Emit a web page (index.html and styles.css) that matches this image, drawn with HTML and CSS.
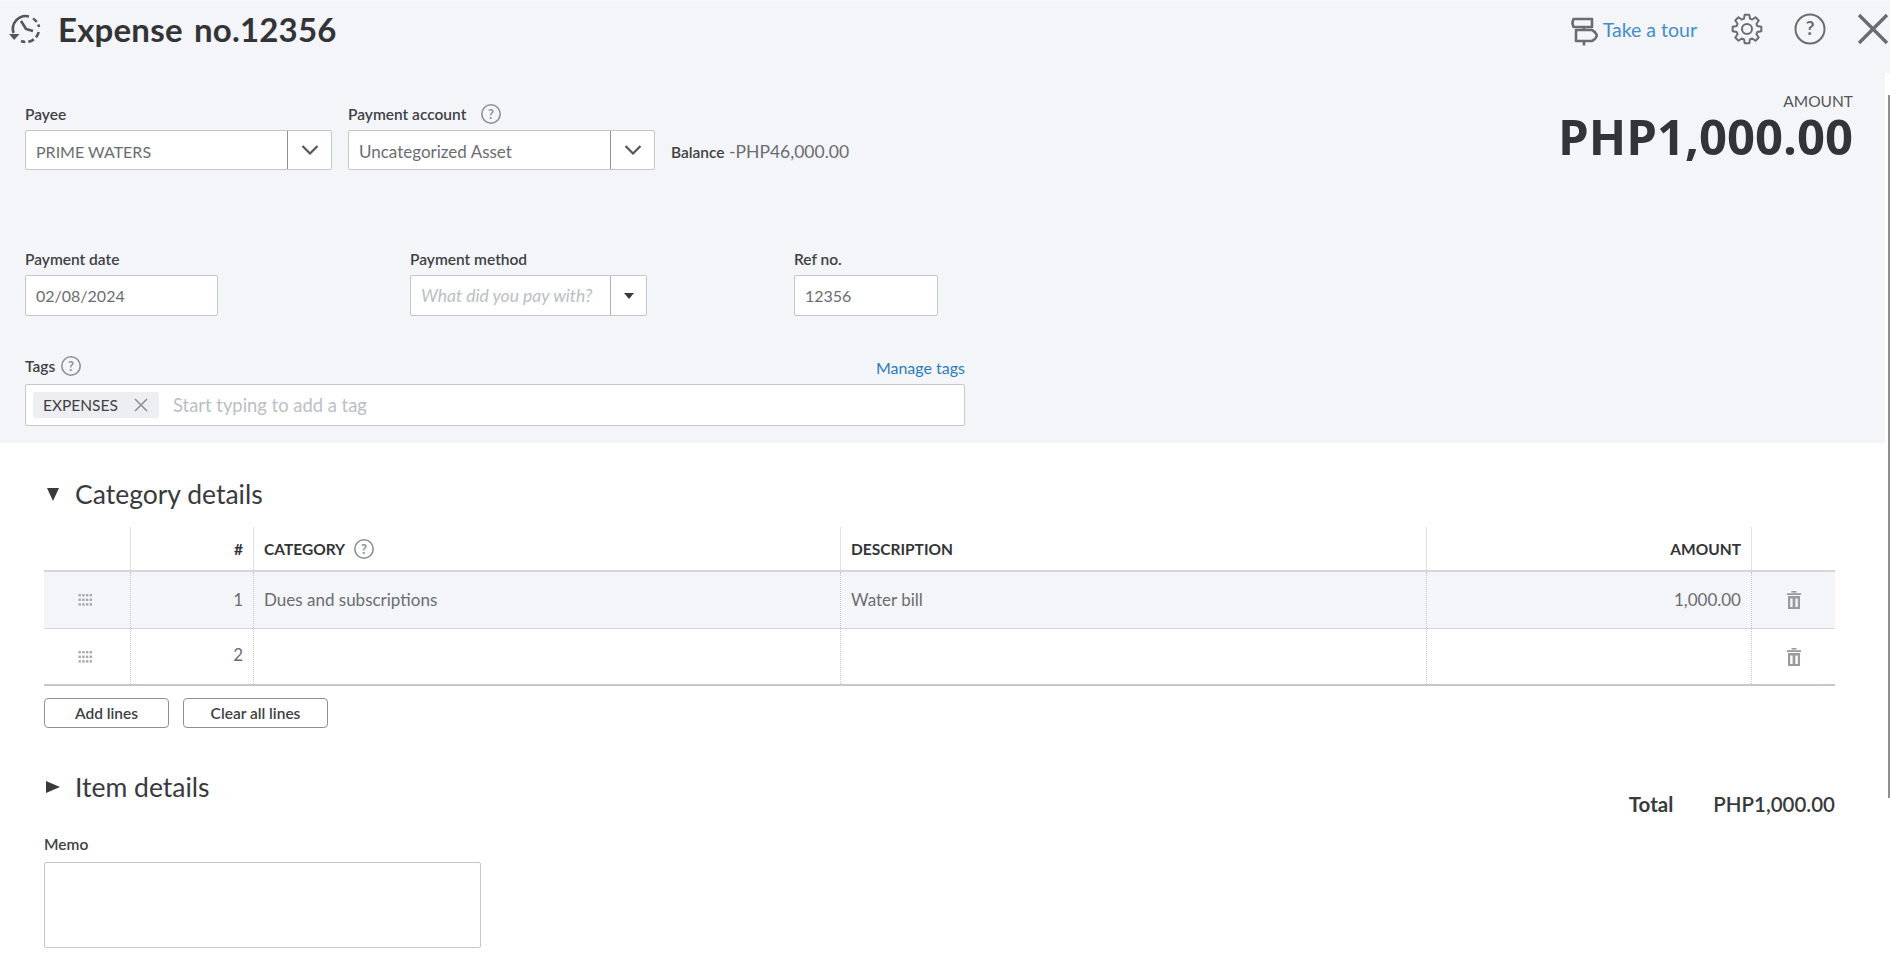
FILE: index.html
```html
<!DOCTYPE html>
<html lang="en">

<head>
    <meta charset="UTF-8">
    <title>Expense no.12356</title>
    <link rel="stylesheet" href="styles.css">
</head>

<body>
    <section class="hoved">
        <div class="titel-bar">
            <div class="titel">
                <svg class="historik" viewBox="0 0 34 32" fill="none" stroke="#54565a" stroke-width="2.6">
                    <path d="M4.5 20 A13 13 0 0 1 20 3.4" />
                    <path d="M24 5.5 A13 13 0 0 1 30 14" stroke-dasharray="5 3" />
                    <path d="M29.7 19 A13 13 0 0 1 12 28" stroke-dasharray="6 3" />
                    <path d="M12 8 L17 16 L24 18" />
                    <path d="M0 21 H10.5 L5.2 27 Z" fill="#54565a" stroke="none" />
                </svg>
                <h1>Expense no.12356</h1>
            </div>
            <div class="vaerktoj">
                <a class="tour" href="#">
                    <svg class="skilt" viewBox="0 0 28 30" fill="none" stroke="#6b6c72" stroke-width="2.6" stroke-linejoin="round">
                        <path d="M3.5 3 H22 V11 H3.5 Q1.5 7 3.5 3 Z" />
                        <path d="M6 14 H22 Q26 16 27 19.5 Q26 23 22 25 H6 Z" />
                        <path d="M14 11 V14 M14 25 V29.5" />
                    </svg>
                    Take a tour
                </a>
                <svg class="ikon" viewBox="0 0 32 32" fill="none" stroke="#6b6c72" stroke-width="2" stroke-linejoin="round">
                    <g transform="translate(16 16)">
                        <circle r="5" />
                        <polygon points="-2.98,-10.38 -2.27,-14.32 2.27,-14.32 2.98,-10.38 5.23,-9.45 8.52,-11.73 11.73,-8.52 9.45,-5.23 10.38,-2.98 14.32,-2.27 14.32,2.27 10.38,2.98 9.45,5.23 11.73,8.52 8.52,11.73 5.23,9.45 2.98,10.38 2.27,14.32 -2.27,14.32 -2.98,10.38 -5.23,9.45 -8.52,11.73 -11.73,8.52 -9.45,5.23 -10.38,2.98 -14.32,2.27 -14.32,-2.27 -10.38,-2.98 -9.45,-5.23 -11.73,-8.52 -8.52,-11.73 -5.23,-9.45" />
                    </g>
                </svg>
                <svg class="ikon" viewBox="0 0 32 32">
                    <circle cx="16" cy="16" r="14.5" fill="none" stroke="#6b6c72" stroke-width="2" />
                    <text x="16" y="22" text-anchor="middle" class="hjaelp-tegn">?</text>
                </svg>
                <svg class="luk" viewBox="0 0 32 32" stroke="#6b6c72" stroke-width="3.4">
                    <path d="M2 2 L30 30 M30 2 L2 30" />
                </svg>
            </div>
        </div>

        <div class="raekke-et">
            <div class="felter">
                <div class="felt">
                    <label>Payee</label>
                    <div class="boks vaelg bred">
                        <span class="vaerdi caps">PRIME WATERS</span>
                        <span class="pil"><svg viewBox="0 0 18 10" fill="none" stroke="#54565a" stroke-width="2.2"><path d="M1.5 1 L9 8.5 L16.5 1" /></svg></span>
                    </div>
                </div>
                <div class="felt">
                    <label>Payment account <svg class="spm spm-luft" viewBox="0 0 20 20"><circle cx="10" cy="10" r="9.2" fill="none" stroke="#8d9096" stroke-width="1.6" /><text x="10" y="14.6" text-anchor="middle">?</text></svg></label>
                    <div class="boks vaelg bred">
                        <span class="vaerdi">Uncategorized Asset</span>
                        <span class="pil"><svg viewBox="0 0 18 10" fill="none" stroke="#54565a" stroke-width="2.2"><path d="M1.5 1 L9 8.5 L16.5 1" /></svg></span>
                    </div>
                </div>
                <p class="saldo"><b>Balance</b> -PHP46,000.00</p>
            </div>
            <div class="beloeb">
                <span>AMOUNT</span>
                <strong>PHP1,000.00</strong>
            </div>
        </div>

        <div class="raekke-to">
            <div class="felt dato">
                <label>Payment date</label>
                <div class="boks hoej"><span class="vaerdi">02/08/2024</span></div>
            </div>
            <div class="felt metode">
                <label>Payment method</label>
                <div class="boks vaelg hoej">
                    <span class="vaerdi tom">What did you pay with?</span>
                    <span class="pil lille"><i class="trekant"></i></span>
                </div>
            </div>
            <div class="felt ref">
                <label>Ref no.</label>
                <div class="boks hoej"><span class="vaerdi">12356</span></div>
            </div>
        </div>

        <div class="tags">
            <div class="tags-top">
                <label>Tags <svg class="spm" viewBox="0 0 20 20"><circle cx="10" cy="10" r="9.2" fill="none" stroke="#8d9096" stroke-width="1.6" /><text x="10" y="14.6" text-anchor="middle">?</text></svg></label>
                <a href="#">Manage tags</a>
            </div>
            <div class="boks tag-boks">
                <span class="tag">EXPENSES
                    <svg viewBox="0 0 14 14" stroke="#8d9096" stroke-width="1.6"><path d="M1 1 L13 13 M13 1 L1 13" /></svg>
                </span>
                <span class="tag-tekst">Start typing to add a tag</span>
            </div>
        </div>
    </section>

    <section class="detaljer">
        <h2 class="sektion kategori"><i class="ned"></i>Category details</h2>

        <div class="tabel">
            <div class="linje top">
                <div></div>
                <div class="hoejre">#</div>
                <div>CATEGORY <svg class="spm" viewBox="0 0 20 20"><circle cx="10" cy="10" r="9.2" fill="none" stroke="#8d9096" stroke-width="1.6" /><text x="10" y="14.6" text-anchor="middle">?</text></svg></div>
                <div>DESCRIPTION</div>
                <div class="hoejre">AMOUNT</div>
                <div></div>
            </div>
            <div class="linje valgt">
                <div class="midt"><svg class="greb" viewBox="0 0 14 12" fill="#a5a8ad"><use href="#prikker" /></svg></div>
                <div class="hoejre">1</div>
                <div>Dues and subscriptions</div>
                <div>Water bill</div>
                <div class="hoejre">1,000.00</div>
                <div class="midt"><svg class="spand" viewBox="0 0 14 18" fill="#999b9f"><use href="#spand" /></svg></div>
            </div>
            <div class="linje sidst">
                <div class="midt"><svg class="greb" viewBox="0 0 14 12" fill="#a5a8ad"><use href="#prikker" /></svg></div>
                <div class="hoejre">2</div>
                <div></div>
                <div></div>
                <div></div>
                <div class="midt"><svg class="spand" viewBox="0 0 14 18" fill="#999b9f"><use href="#spand" /></svg></div>
            </div>
        </div>

        <div class="knapper">
            <button class="knap add">Add lines</button>
            <button class="knap clear">Clear all lines</button>
        </div>

        <div class="bund">
            <div>
                <h2 class="sektion item"><i class="hen"></i>Item details</h2>
                <label class="memo-label">Memo</label>
                <div class="memo"></div>
            </div>
            <div class="total">
                <span>Total</span>
                <span class="total-tal">PHP1,000.00</span>
            </div>
        </div>
    </section>

    <div class="kant"></div>
    <div class="rullebar"></div>

    <svg class="defs" width="0" height="0">
        <defs>
            <g id="prikker">
                <rect x="0.5" y="0" width="2.4" height="2.4" /><rect x="4.2" y="0" width="2.4" height="2.4" /><rect x="7.9" y="0" width="2.4" height="2.4" /><rect x="11.6" y="0" width="2.4" height="2.4" />
                <rect x="0.5" y="4.6" width="2.4" height="2.4" /><rect x="4.2" y="4.6" width="2.4" height="2.4" /><rect x="7.9" y="4.6" width="2.4" height="2.4" /><rect x="11.6" y="4.6" width="2.4" height="2.4" />
                <rect x="0.5" y="9.2" width="2.4" height="2.4" /><rect x="4.2" y="9.2" width="2.4" height="2.4" /><rect x="7.9" y="9.2" width="2.4" height="2.4" /><rect x="11.6" y="9.2" width="2.4" height="2.4" />
            </g>
            <g id="spand">
                <rect x="4.5" y="0" width="5" height="1.6" />
                <rect x="0" y="2.2" width="14" height="1.8" />
                <path d="M1 5 H13 V18 H1 Z M3.2 7.5 V16 H5.6 V7.5 Z M8.4 7.5 V16 H10.8 V7.5 Z" fill-rule="evenodd" />
            </g>
        </defs>
    </svg>
</body>

</html>
```

FILE: styles.css
```css
* {
    box-sizing: border-box;
}

html,
body {
    margin: 0;
    height: 100%;
    overflow: hidden;
}

body {
    position: relative;
    background-color: #fff;
    color: #393a3d;
    font-family: Lato, "Open Sans", sans-serif;
    font-size: 15px;
}

label {
    display: flex;
    align-items: flex-start;
    gap: 6px;
    font-size: 15.5px;
    font-weight: 600;
    color: #404145;
}

a {
    color: #2b7cbf;
    text-decoration: none;
}

.hoved {
    height: 443px;
    background-color: #f4f5f8;
    border-top: 1px solid #fafafb;
}

.titel-bar {
    display: flex;
    justify-content: space-between;
    align-items: center;
    height: 56px;
}

.titel {
    display: flex;
    align-items: center;
    padding-left: 9px;
}

.historik {
    width: 34px;
    height: 32px;
    margin-right: 15px;
}

h1 {
    margin: 0;
    font-size: 33px;
    font-weight: 700;
    letter-spacing: 0.2px;
    word-spacing: 3px;
    color: #333437;
}

.vaerktoj {
    display: flex;
    align-items: center;
}

.tour {
    display: flex;
    align-items: center;
    gap: 5px;
    font-size: 19.5px;
    margin-right: 34px;
    color: #3f8fcb;
}

.skilt {
    width: 28px;
    height: 30px;
    margin-top: 4px;
}

.ikon {
    width: 32px;
    height: 32px;
    margin-right: 31px;
}

.hjaelp-tegn {
    font-family: Lato, sans-serif;
    font-size: 19px;
    font-weight: 700;
    fill: #6b6c72;
}

.luk {
    width: 32px;
    height: 32px;
    margin-right: 1px;
}

.raekke-et {
    display: flex;
    justify-content: space-between;
    padding: 0 37px 0 25px;
    height: 113px;
}

.felter {
    display: flex;
    align-items: flex-end;
    gap: 16px;
    height: 113px;
}

.felt label {
    height: 24px;
    line-height: 16px;
}

.boks {
    display: flex;
    align-items: center;
    background-color: #fff;
    border: 1px solid #c4c7cc;
    border-radius: 2px;
    height: 40px;
}

.hoej {
    height: 41px;
}

.vaelg .vaerdi {
    flex: 1;
}

.bred {
    width: 307px;
}

.bred .vaerdi {
    padding-top: 2px;
}

.vaerdi {
    padding-left: 10px;
    font-size: 17px;
    line-height: 21px;
    color: #6b6c72;
}

.caps {
    font-size: 16px;
}

.dato .vaerdi,
.ref .vaerdi {
    font-size: 16px;
}

.tom {
    font-size: 17.5px;
    font-style: italic;
    color: #babec5;
}

.pil {
    display: flex;
    align-items: center;
    justify-content: center;
    width: 44px;
    height: 100%;
    border-left: 1px solid #8d9096;
}

.pil svg {
    width: 18px;
    height: 10px;
}

.lille {
    width: 36px;
    border-left-color: #b0b3b8;
}

.trekant {
    border-left: 5px solid transparent;
    border-right: 5px solid transparent;
    border-top: 6px solid #393a3d;
}

.saldo {
    margin: 0 0 8px;
    font-size: 17.5px;
    color: #6b6c72;
}

.saldo b {
    font-size: 15.5px;
    font-weight: 600;
    color: #404145;
}

.spm {
    width: 20px;
    height: 20px;
    flex: none;
}

.felt .spm {
    margin-top: -2px;
}

.spm-luft {
    margin-left: 9px;
}

.spm text {
    font-family: Lato, sans-serif;
    font-size: 13px;
    font-weight: 700;
    fill: #8d9096;
}

.beloeb {
    display: flex;
    flex-direction: column;
    align-items: flex-end;
    padding-top: 34px;
}

.beloeb span {
    font-size: 15.5px;
    line-height: 20px;
    color: #54565a;
}

.beloeb strong {
    font-family: "Open Sans", sans-serif;
    font-size: 49px;
    line-height: 50px;
    color: #333437;
}

.raekke-to {
    display: flex;
    padding: 81px 0 0 25px;
}

.dato {
    width: 385px;
}

.dato .boks {
    width: 193px;
}

.metode {
    width: 384px;
}

.metode .boks {
    width: 237px;
}

.ref .boks {
    width: 144px;
}

.tags {
    width: 965px;
    padding: 40px 0 0 25px;
}

.tags-top {
    display: flex;
    justify-content: space-between;
    align-items: flex-end;
    height: 28px;
}

.tags-top label {
    line-height: 20px;
    height: 28px;
}

.tags-top a {
    font-size: 16px;
    line-height: 32px;
}

.tag-boks {
    height: 42px;
    padding: 0 0 1px 7px;
}

.tag {
    display: flex;
    align-items: center;
    justify-content: space-between;
    width: 126px;
    height: 26px;
    padding: 0 10px;
    margin-right: 14px;
    border-radius: 3px;
    background-color: #eceef1;
    font-size: 15.5px;
    color: #404145;
}

.tag svg {
    width: 14px;
    height: 14px;
    margin-right: 1px;
}

.tag-tekst {
    font-size: 18.4px;
    color: #babec5;
}

.detaljer {
    padding: 0 55px 0 44px;
}

.sektion {
    display: flex;
    align-items: center;
    margin: 0;
    font-size: 26.5px;
    font-weight: 400;
    color: #393a3d;
}

.kategori {
    height: 84px;
    padding-top: 18px;
}

.ned {
    margin: 0 16px 0 3px;
    border-left: 6px solid transparent;
    border-right: 6px solid transparent;
    border-top: 13px solid #393a3d;
}

.hen {
    margin: 0 15px 0 2px;
    border-top: 6.5px solid transparent;
    border-bottom: 6.5px solid transparent;
    border-left: 14px solid #393a3d;
}

.linje {
    display: grid;
    grid-template-columns: 87px 123px 587px 586px 325px 83px;
    height: 57px;
    border-bottom: 1px solid #d4d7dc;
    font-size: 17px;
    color: #6b6c72;
}

.linje > div {
    display: flex;
    align-items: center;
    gap: 9px;
    padding: 0 10px;
    border-right: 1px dotted #c4c7cc;
}

.linje > div:last-child {
    border-right: 0;
}

.top {
    height: 45px;
    border-bottom: 2px solid #d4d7dc;
    font-size: 15.5px;
    font-weight: 700;
    color: #333437;
}

.top > div {
    border-right: 1px solid #dfe1e5;
}

.valgt {
    background-color: #f4f5f8;
}

.valgt > div {
    padding-bottom: 2px;
}

.sidst {
    border-bottom: 2px solid #c4c7cc;
}

.sidst > .hoejre {
    padding-bottom: 4px;
}

.linje > .hoejre {
    justify-content: flex-end;
}

.linje > .midt {
    justify-content: center;
    padding-bottom: 0;
}

.greb {
    width: 14px;
    height: 12px;
    margin-right: 5px;
}

.spand {
    width: 14px;
    height: 18px;
}

.knapper {
    display: flex;
    gap: 14px;
    padding-top: 12px;
}

.knap {
    height: 30px;
    border: 1px solid #8d9096;
    border-radius: 4px;
    background-color: #fff;
    font-family: Lato, sans-serif;
    font-size: 15.5px;
    font-weight: 600;
    color: #404145;
}

.add {
    width: 125px;
}

.clear {
    width: 145px;
}

.bund {
    display: flex;
    justify-content: space-between;
}

.item {
    height: 118px;
}

.memo-label {
    margin-top: -11px;
    line-height: 19px;
    height: 27px;
}

.memo {
    width: 437px;
    height: 86px;
    background-color: #fff;
    border: 1px solid #c4c7cc;
    border-radius: 2px;
}

.total {
    display: flex;
    gap: 40px;
    padding-top: 64px;
    font-size: 20.5px;
    font-weight: 700;
    color: #393a3d;
}

.total-tal {
    font-weight: 600;
}

.kant {
    position: absolute;
    top: 73px;
    right: 0;
    bottom: 0;
    width: 5px;
    background-color: #fff;
}

.rullebar {
    position: absolute;
    top: 95px;
    right: 0;
    width: 2px;
    height: 703px;
    background-color: #8f8f8f;
}

.defs {
    position: absolute;
}
```
